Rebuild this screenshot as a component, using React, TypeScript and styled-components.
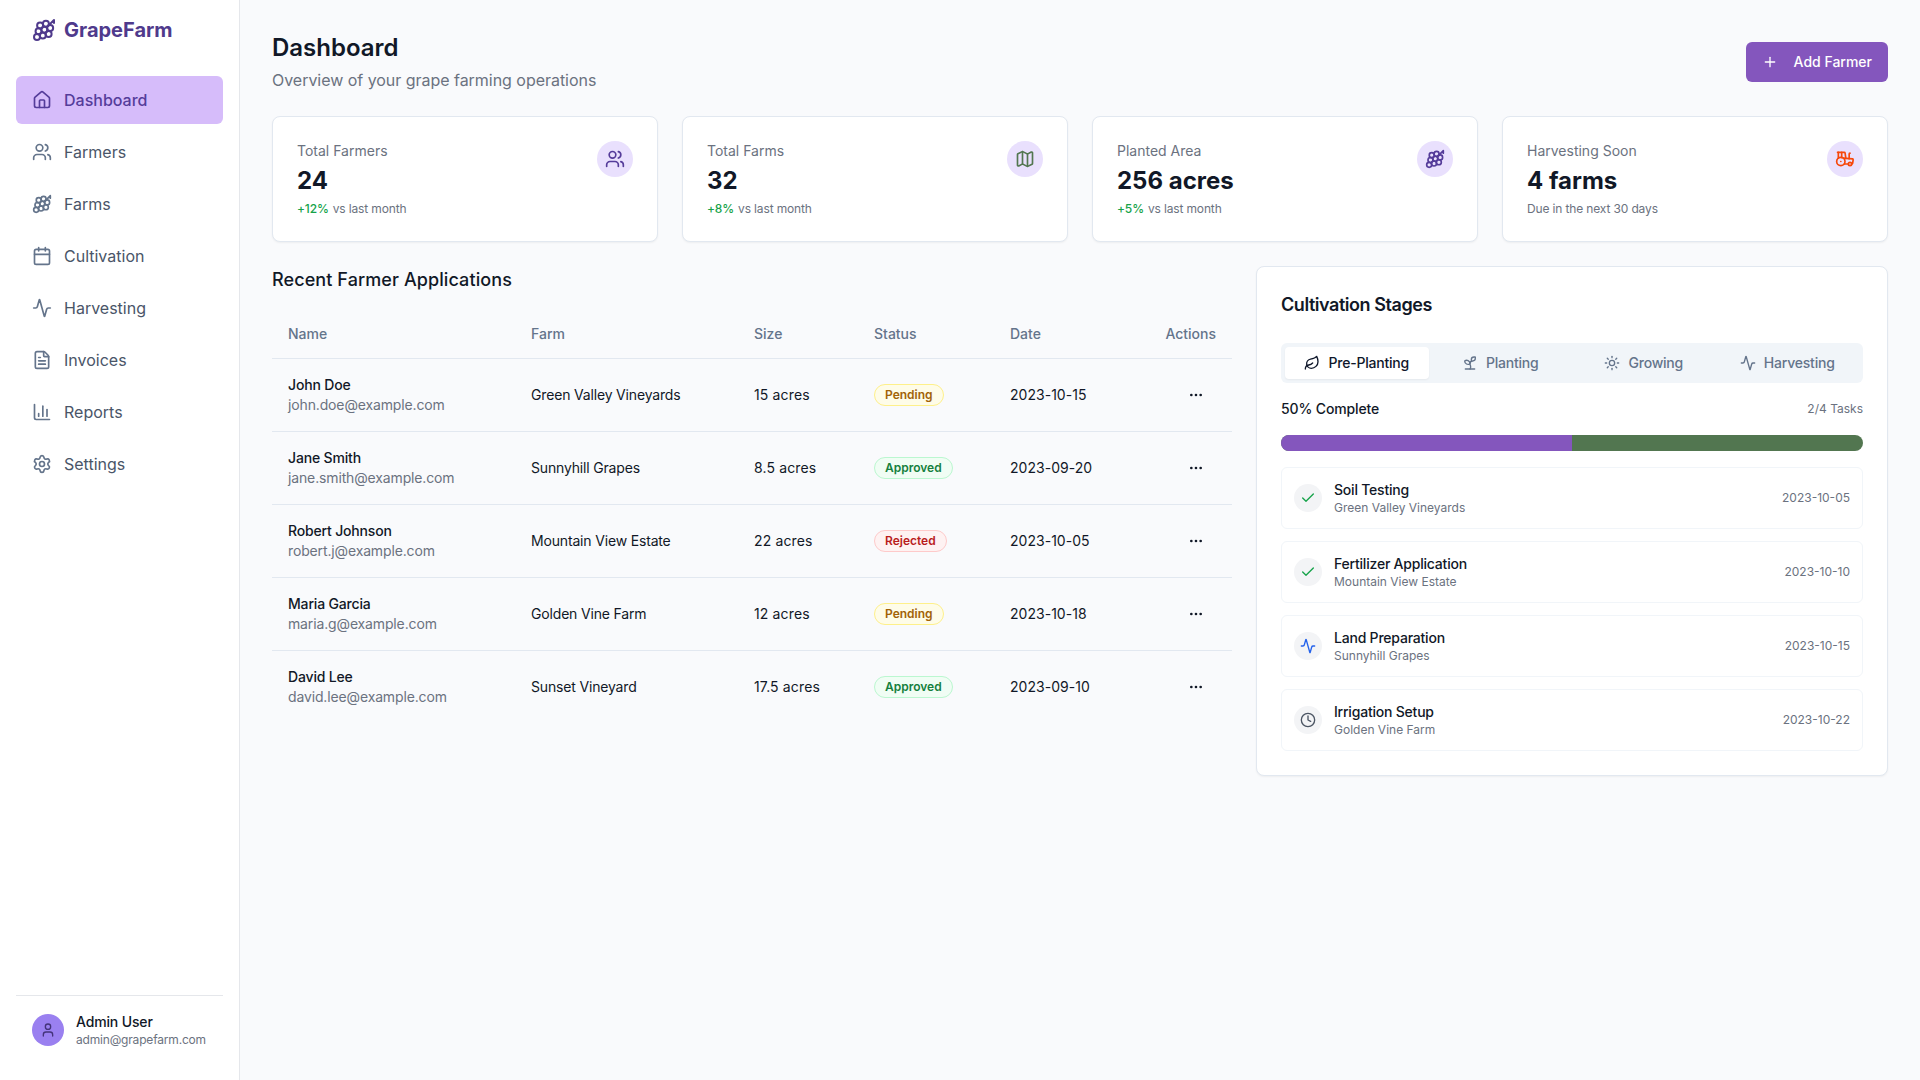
import React from 'react'
import styled, { createGlobalStyle } from 'styled-components'
import {
  Activity,
  BarChart3,
  Calendar,
  Check,
  Clock,
  Ellipsis,
  FileText,
  Grape,
  House,
  Leaf,
  Map as MapIcon,
  Plus,
  Settings,
  Sprout,
  Sun,
  Tractor,
  User,
  Users,
} from 'lucide-react'

const navItems = [
  { label: 'Dashboard', icon: House, active: true },
  { label: 'Farmers', icon: Users },
  { label: 'Farms', icon: Grape },
  { label: 'Cultivation', icon: Calendar },
  { label: 'Harvesting', icon: Activity },
  { label: 'Invoices', icon: FileText },
  { label: 'Reports', icon: BarChart3 },
  { label: 'Settings', icon: Settings },
]

const stats = [
  { label: 'Total Farmers', value: '24', delta: '+12%', note: 'vs last month', icon: Users, color: '#553c9a' },
  { label: 'Total Farms', value: '32', delta: '+8%', note: 'vs last month', icon: MapIcon, color: '#527650' },
  { label: 'Planted Area', value: '256 acres', delta: '+5%', note: 'vs last month', icon: Grape, color: '#553c9a' },
  { label: 'Harvesting Soon', value: '4 farms', note: 'Due in the next 30 days', icon: Tractor, color: '#f6470a' },
]

type Status = 'Pending' | 'Approved' | 'Rejected'

const applications: { name: string; email: string; farm: string; size: string; status: Status; date: string }[] = [
  { name: 'John Doe', email: 'john.doe@example.com', farm: 'Green Valley Vineyards', size: '15 acres', status: 'Pending', date: '2023-10-15' },
  { name: 'Jane Smith', email: 'jane.smith@example.com', farm: 'Sunnyhill Grapes', size: '8.5 acres', status: 'Approved', date: '2023-09-20' },
  { name: 'Robert Johnson', email: 'robert.j@example.com', farm: 'Mountain View Estate', size: '22 acres', status: 'Rejected', date: '2023-10-05' },
  { name: 'Maria Garcia', email: 'maria.g@example.com', farm: 'Golden Vine Farm', size: '12 acres', status: 'Pending', date: '2023-10-18' },
  { name: 'David Lee', email: 'david.lee@example.com', farm: 'Sunset Vineyard', size: '17.5 acres', status: 'Approved', date: '2023-09-10' },
]

const tabs = [
  { label: 'Pre-Planting', icon: Leaf, active: true },
  { label: 'Planting', icon: Sprout },
  { label: 'Growing', icon: Sun },
  { label: 'Harvesting', icon: Activity },
]

const tasks = [
  { title: 'Soil Testing', farm: 'Green Valley Vineyards', date: '2023-10-05', icon: Check, color: '#16a34a' },
  { title: 'Fertilizer Application', farm: 'Mountain View Estate', date: '2023-10-10', icon: Check, color: '#16a34a' },
  { title: 'Land Preparation', farm: 'Sunnyhill Grapes', date: '2023-10-15', icon: Activity, color: '#2563eb' },
  { title: 'Irrigation Setup', farm: 'Golden Vine Farm', date: '2023-10-22', icon: Clock, color: '#4b5563' },
]

export default function App() {
  return (
    <Layout>
      <GlobalStyle />
      <Sidebar>
        <Logo>
          <Grape size={24} />
          GrapeFarm
        </Logo>
        <Nav>
          {navItems.map(({ label, icon: Icon, active }) => (
            <NavItem key={label} $active={active}>
              <Icon size={20} />
              {label}
            </NavItem>
          ))}
        </Nav>
        <SidebarFooter>
          <Avatar>
            <User size={16} />
          </Avatar>
          <div>
            <AdminName>Admin User</AdminName>
            <AdminEmail>admin@grapefarm.com</AdminEmail>
          </div>
        </SidebarFooter>
      </Sidebar>

      <Main>
        <PageHeader>
          <div>
            <PageTitle>Dashboard</PageTitle>
            <PageSubtitle>Overview of your grape farming operations</PageSubtitle>
          </div>
          <AddButton>
            <Plus size={16} />
            Add Farmer
          </AddButton>
        </PageHeader>

        <StatGrid>
          {stats.map(({ label, value, delta, note, icon: Icon, color }) => (
            <StatCard key={label}>
              <div>
                <StatLabel>{label}</StatLabel>
                <StatValue>{value}</StatValue>
                <StatNote>
                  {delta && <Delta>{delta}</Delta>}
                  {note}
                </StatNote>
              </div>
              <StatIcon $color={color}>
                <Icon size={20} />
              </StatIcon>
            </StatCard>
          ))}
        </StatGrid>

        <Columns>
          <section>
            <SectionTitle>Recent Farmer Applications</SectionTitle>
            <Table>
              <thead>
                <tr>
                  <Th $width={243}>Name</Th>
                  <Th $width={223}>Farm</Th>
                  <Th $width={120}>Size</Th>
                  <Th $width={136}>Status</Th>
                  <Th $width={155}>Date</Th>
                  <Th $width={83} $right>Actions</Th>
                </tr>
              </thead>
              <tbody>
                {applications.map(a => (
                  <tr key={a.email}>
                    <Td>
                      <FarmerName>{a.name}</FarmerName>
                      <FarmerEmail>{a.email}</FarmerEmail>
                    </Td>
                    <FarmCell>{a.farm}</FarmCell>
                    <SizeCell>{a.size}</SizeCell>
                    <Td>
                      <Badge $status={a.status}>{a.status}</Badge>
                    </Td>
                    <DateCell>{a.date}</DateCell>
                    <Td $right>
                      <MoreButton>
                        <Ellipsis size={16} />
                      </MoreButton>
                    </Td>
                  </tr>
                ))}
              </tbody>
            </Table>
          </section>

          <StagesPanel>
            <StagesTitle>Cultivation Stages</StagesTitle>
            <TabList>
              {tabs.map(({ label, icon: Icon, active }) => (
                <Tab key={label} $active={active}>
                  <Icon size={16} />
                  {label}
                </Tab>
              ))}
            </TabList>
            <ProgressHead>
              <ProgressLabel>50% Complete</ProgressLabel>
              <ProgressCount>2/4 Tasks</ProgressCount>
            </ProgressHead>
            <ProgressTrack>
              <ProgressFill style={{ width: '50%' }} />
            </ProgressTrack>
            <TaskList>
              {tasks.map(({ title, farm, date, icon: Icon, color }) => (
                <Task key={title}>
                  <TaskIcon $color={color}>
                    <Icon size={16} />
                  </TaskIcon>
                  <TaskBody>
                    <TaskTitle>{title}</TaskTitle>
                    <TaskFarm>{farm}</TaskFarm>
                  </TaskBody>
                  <TaskDate>{date}</TaskDate>
                </Task>
              ))}
            </TaskList>
          </StagesPanel>
        </Columns>
      </Main>
    </Layout>
  )
}

const GlobalStyle = createGlobalStyle`
  * {
    box-sizing: border-box;
  }

  body {
    margin: 0;
    background: #f9fafc;
    color: #111827;
    font-family: Inter, "Liberation Sans", sans-serif;
  }
`

const Layout = styled.div`
  display: flex;
  min-height: 100vh;
`

const Sidebar = styled.aside`
  display: flex;
  flex-direction: column;
  flex: 0 0 240px;
  min-width: 0;
  height: 1080px;
  padding: 0 16px 32px;
  background: #fff;
  border-right: 1px solid #e5e7eb;
`

const Logo = styled.div`
  display: flex;
  align-items: center;
  gap: 8px;
  height: 60px;
  margin-bottom: 16px;
  padding-left: 16px;
  font-size: 20px;
  font-weight: 700;
  line-height: 28px;
  color: #4f3a8c;
`

const Nav = styled.nav`
  display: flex;
  flex-direction: column;
  gap: 4px;
`

const NavItem = styled.a<{ $active?: boolean }>`
  display: flex;
  align-items: center;
  gap: 12px;
  height: 48px;
  padding: 0 16px;
  border-radius: 6px;
  font-size: 16px;
  line-height: 24px;
  background: ${p => (p.$active ? '#d6bcfa' : 'transparent')};
  color: ${p => (p.$active ? '#553c9a' : '#4a5568')};
  font-weight: ${p => (p.$active ? 500 : 400)};

  svg {
    color: ${p => (p.$active ? '#553c9a' : '#64748b')};
  }
`

const SidebarFooter = styled.div`
  display: flex;
  align-items: center;
  gap: 12px;
  margin-top: auto;
  padding: 16px 16px 0;
  border-top: 1px solid #e5e7eb;
  white-space: nowrap;
`

const Avatar = styled.div`
  display: flex;
  flex: none;
  align-items: center;
  justify-content: center;
  width: 32px;
  height: 32px;
  border-radius: 50%;
  background: #9a80f0;
  color: #44337a;
`

const AdminName = styled.div`
  font-size: 14px;
  font-weight: 500;
  line-height: 20px;
  letter-spacing: -0.01em;
`

const AdminEmail = styled.div`
  font-size: 12px;
  line-height: 16px;
  letter-spacing: -0.015em;
  color: #6b7280;
`

const Main = styled.main`
  flex: 1;
  min-width: 0;
  padding: 32px;
`

const PageHeader = styled.header`
  display: flex;
  align-items: center;
  justify-content: space-between;
  margin-bottom: 24px;
`

const PageTitle = styled.h1`
  margin: 0 0 4px;
  font-size: 24px;
  font-weight: 600;
  line-height: 32px;
`

const PageSubtitle = styled.p`
  margin: 0;
  font-size: 16px;
  line-height: 24px;
  letter-spacing: -0.002em;
  color: #6b7280;
`

const AddButton = styled.button`
  display: flex;
  align-items: center;
  gap: 16px;
  height: 40px;
  padding: 0 16px 1px;
  border: 0;
  border-radius: 6px;
  background: #8456bd;
  color: #fff;
  font-family: inherit;
  font-size: 14px;
  font-weight: 500;
  line-height: 20px;
`

const StatGrid = styled.div`
  display: grid;
  grid-template-columns: repeat(4, 1fr);
  gap: 24px;
  margin-bottom: 24px;
`

const StatCard = styled.div`
  display: flex;
  justify-content: space-between;
  padding: 24px;
  background: #fff;
  border: 1px solid #e2e8f0;
  border-radius: 8px;
  box-shadow: 0 1px 2px rgba(0, 0, 0, 0.05);
`

const StatLabel = styled.div`
  font-size: 14px;
  font-weight: 400;
  line-height: 20px;
  color: #6b7280;
`

const StatValue = styled.div`
  margin-top: 4px;
  font-size: 24px;
  font-weight: 700;
  line-height: 32px;
`

const StatNote = styled.div`
  margin-top: 4px;
  font-size: 12px;
  line-height: 16px;
  letter-spacing: -0.012em;
  color: #6b7280;
`

const Delta = styled.span`
  margin-right: 4px;
  font-weight: 500;
  color: #16a34a;
`

const StatIcon = styled.div<{ $color: string }>`
  display: flex;
  align-items: center;
  justify-content: center;
  width: 36px;
  height: 36px;
  border-radius: 50%;
  background: #e9e0fd;
  color: ${p => p.$color};
`

const Columns = styled.div`
  display: grid;
  grid-template-columns: repeat(5, 1fr);
  gap: 24px;
  align-items: start;

  > section {
    grid-column: span 3;
  }
`

const SectionTitle = styled.h2`
  margin: 0 0 16px;
  font-size: 18px;
  font-weight: 500;
  line-height: 28px;
  letter-spacing: 0.005em;
`

const Table = styled.table`
  width: 100%;
  table-layout: fixed;
  border-collapse: collapse;
  font-size: 14px;
  line-height: 20px;
`

const Th = styled.th<{ $width: number; $right?: boolean }>`
  width: ${p => p.$width}px;
  height: 48px;
  padding: 0 16px;
  border-bottom: 1px solid #e2e8f0;
  font-weight: 500;
  color: #64748b;
  text-align: ${p => (p.$right ? 'right' : 'left')};
`

const Td = styled.td<{ $right?: boolean }>`
  height: 73px;
  padding: 16px;
  text-align: ${p => (p.$right ? 'right' : 'left')};

  tr:not(:last-child) > & {
    border-bottom: 1px solid #e2e8f0;
  }
`

const FarmCell = styled(Td)`
  letter-spacing: -0.012em;
`

const SizeCell = styled(Td)`
  letter-spacing: 0.01em;
`

const DateCell = styled(Td)`
  letter-spacing: 0.002em;
`

const FarmerName = styled.div`
  font-weight: 500;
  letter-spacing: -0.012em;
`

const FarmerEmail = styled.div`
  letter-spacing: -0.01em;
  color: #6b7280;
`

const badgeColors: Record<Status, string> = {
  Pending: 'background: #fefce8; border-color: #fef08a; color: #a16207;',
  Approved: 'background: #f0fdf4; border-color: #bbf7d0; color: #15803d;',
  Rejected: 'background: #fef2f2; border-color: #fecaca; color: #b91c1c;',
}

const Badge = styled.span<{ $status: Status }>`
  display: inline-block;
  padding: 2px 10px;
  border: 1px solid;
  border-radius: 999px;
  font-size: 12px;
  font-weight: 600;
  line-height: 16px;
  vertical-align: middle;
  ${p => badgeColors[p.$status]}
`

const MoreButton = styled.button`
  display: inline-flex;
  align-items: center;
  justify-content: center;
  width: 40px;
  height: 40px;
  margin: -10px 0;
  padding: 0;
  border: 0;
  background: none;
  color: #111827;
  vertical-align: middle;
`

const StagesPanel = styled.div`
  grid-column: span 2;
  padding: 24px;
  background: #fff;
  border: 1px solid #e2e8f0;
  border-radius: 8px;
  box-shadow: 0 1px 2px rgba(0, 0, 0, 0.05);
`

const StagesTitle = styled.h2`
  margin: 0 0 24px;
  font-size: 18px;
  font-weight: 600;
  line-height: 28px;
  letter-spacing: -0.025em;
`

const TabList = styled.div`
  display: grid;
  grid-template-columns: repeat(4, 1fr);
  height: 40px;
  margin-bottom: 16px;
  padding: 4px;
  border-radius: 6px;
  background: #f1f5f9;
`

const Tab = styled.div<{ $active?: boolean }>`
  display: flex;
  align-items: center;
  justify-content: center;
  gap: 8px;
  padding-bottom: 1px;
  border-radius: 4px;
  font-size: 14px;
  font-weight: 500;
  line-height: 20px;
  letter-spacing: -0.015em;
  background: ${p => (p.$active ? '#fff' : 'transparent')};
  color: ${p => (p.$active ? '#0f172a' : '#64748b')};
  box-shadow: ${p => (p.$active ? '0 1px 2px rgba(0, 0, 0, 0.05)' : 'none')};
`

const ProgressHead = styled.div`
  display: flex;
  align-items: center;
  justify-content: space-between;
  margin-bottom: 16px;
`

const ProgressLabel = styled.span`
  font-size: 14px;
  font-weight: 500;
  line-height: 20px;
  letter-spacing: -0.01em;
`

const ProgressCount = styled.span`
  font-size: 12px;
  line-height: 16px;
  color: #6b7280;
`

const ProgressTrack = styled.div`
  height: 16px;
  margin-bottom: 16px;
  overflow: hidden;
  border-radius: 999px;
  background: #527650;
`

const ProgressFill = styled.div`
  height: 100%;
  background: #8456bd;
`

const TaskList = styled.div`
  display: flex;
  flex-direction: column;
  gap: 12px;
`

const Task = styled.div`
  display: flex;
  align-items: center;
  gap: 12px;
  padding: 12px;
  border: 1px solid #f1f5f9;
  border-radius: 6px;
`

const TaskIcon = styled.div<{ $color: string }>`
  display: flex;
  align-items: center;
  justify-content: center;
  width: 28px;
  height: 28px;
  border-radius: 50%;
  background: #f3f4f6;
  color: ${p => p.$color};
`

const TaskBody = styled.div`
  flex: 1;
`

const TaskTitle = styled.div`
  font-size: 14px;
  font-weight: 500;
  line-height: 20px;
  letter-spacing: -0.015em;
`

const TaskFarm = styled.div`
  font-size: 12px;
  line-height: 16px;
  color: #6b7280;
`

const TaskDate = styled.div`
  font-size: 12px;
  line-height: 16px;
  color: #6b7280;
`
